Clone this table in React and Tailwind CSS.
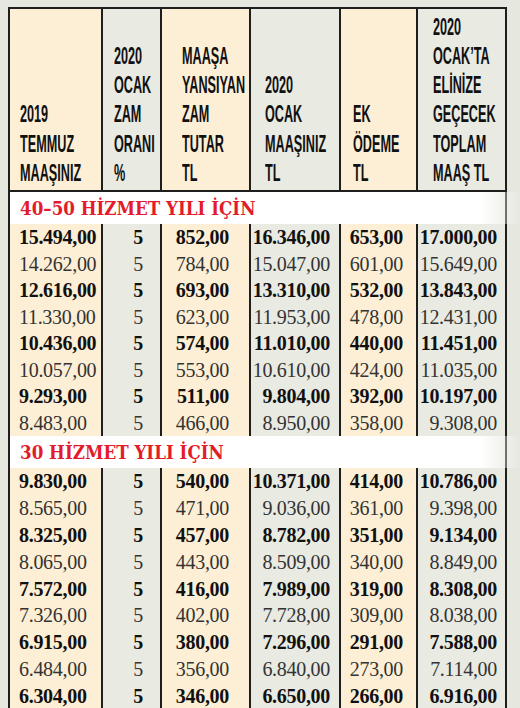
import React from "react";

const cols = [
  { w: "w-[93px]", bg: "bg-[#fdefd6]", border: true, hp: "pl-[10px]", body: "justify-start pl-[9px]" },
  { w: "w-[59px]", bg: "bg-[#e9eae2]", border: true, hp: "pl-[11px]", body: "justify-end pr-[17px]" },
  { w: "w-[89px]", bg: "bg-[#fdefd6]", border: true, hp: "pl-[20px]", body: "justify-end pr-[20px]" },
  { w: "w-[90px]", bg: "bg-[#e9eae2]", border: true, hp: "pl-[14px]", body: "justify-end pr-[9px]" },
  { w: "w-[77px]", bg: "bg-[#fdefd6]", border: true, hp: "pl-[12px]", body: "justify-end pr-[13px]" },
  { w: "w-[87px]", bg: "bg-[#e9eae2]", border: false, hp: "pl-[15px]", body: "justify-end pr-[8px]" },
];

const headers = [
  ["2019", "TEMMUZ", "MAAŞINIZ"],
  ["2020", "OCAK", "ZAM", "ORANI", "%"],
  ["MAAŞA", "YANSIYAN", "ZAM", "TUTAR", "TL"],
  ["2020", "OCAK", "MAAŞINIZ", "TL"],
  ["EK", "ÖDEME", "TL"],
  ["2020", "OCAK’TA", "ELİNİZE", "GEÇECEK", "TOPLAM", "MAAŞ TL"],
];

const sec1 = [
  ["15.494,00", "5", "852,00", "16.346,00", "653,00", "17.000,00"],
  ["14.262,00", "5", "784,00", "15.047,00", "601,00", "15.649,00"],
  ["12.616,00", "5", "693,00", "13.310,00", "532,00", "13.843,00"],
  ["11.330,00", "5", "623,00", "11.953,00", "478,00", "12.431,00"],
  ["10.436,00", "5", "574,00", "11.010,00", "440,00", "11.451,00"],
  ["10.057,00", "5", "553,00", "10.610,00", "424,00", "11.035,00"],
  ["9.293,00", "5", "511,00", "9.804,00", "392,00", "10.197,00"],
  ["8.483,00", "5", "466,00", "8.950,00", "358,00", "9.308,00"],
];

const sec2 = [
  ["9.830,00", "5", "540,00", "10.371,00", "414,00", "10.786,00"],
  ["8.565,00", "5", "471,00", "9.036,00", "361,00", "9.398,00"],
  ["8.325,00", "5", "457,00", "8.782,00", "351,00", "9.134,00"],
  ["8.065,00", "5", "443,00", "8.509,00", "340,00", "8.849,00"],
  ["7.572,00", "5", "416,00", "7.989,00", "319,00", "8.308,00"],
  ["7.326,00", "5", "402,00", "7.728,00", "309,00", "8.038,00"],
  ["6.915,00", "5", "380,00", "7.296,00", "291,00", "7.588,00"],
  ["6.484,00", "5", "356,00", "6.840,00", "273,00", "7.114,00"],
  ["6.304,00", "5", "346,00", "6.650,00", "266,00", "6.916,00"],
];

function Band({ title }) {
  return (
    <div className="h-[32px] mr-[-16px] flex items-center pl-[10px] bg-linear-to-r from-white from-[92%] to-transparent">
      <span className="inline-block origin-left scale-x-[0.88] whitespace-nowrap font-['DejaVu_Serif'] font-bold text-[19px] text-[#e31b2a] leading-none pt-[1px]">
        {title}
      </span>
    </div>
  );
}

function Row({ r, i, h }) {
  const bold = i % 2 === 0;
  return (
    <div className={`flex ${h}`}>
      {r.map((v, j) => (
        <div
          key={j}
          className={`${cols[j].w} ${cols[j].bg} ${cols[j].border ? "border-r-2 border-[#1e1e1e]" : ""} ${cols[j].body} flex items-center`}
        >
          <span
            className={`font-['Liberation_Serif'] text-[20px] leading-none tracking-[-0.3px] ${bold ? "font-bold text-[#111]" : "font-normal text-[#333]"}`}
          >
            {v}
          </span>
        </div>
      ))}
    </div>
  );
}

export default function App() {
  return (
    <div className="w-[520px] h-[708px] overflow-hidden bg-[#e6e7df]">
      <div className="ml-[8px] mt-[7px] w-[499px] border-2 border-b-0 border-[#1e1e1e]">
        <div className="flex h-[183px] border-b-2 border-[#1e1e1e]">
          {headers.map((h, j) => (
            <div
              key={j}
              className={`${cols[j].w} ${cols[j].bg} ${cols[j].border ? "border-r-2 border-[#1e1e1e]" : ""} ${cols[j].hp} flex flex-col justify-end pb-[2px]`}
            >
              <div className="origin-bottom-left scale-x-[0.55] whitespace-nowrap font-['Liberation_Sans'] font-bold text-[23px] leading-[29.2px] text-[#111]">
                {h.map((l, k) => (
                  <div key={k}>{l}</div>
                ))}
              </div>
            </div>
          ))}
        </div>
        <Band title="40–50 HİZMET YILI İÇİN" />
        {sec1.map((r, i) => (
          <Row key={i} r={r} i={i} h="h-[26.5px]" />
        ))}
        <Band title="30 HİZMET YILI İÇİN" />
        {sec2.map((r, i) => (
          <Row key={i} r={r} i={i} h="h-[26.8px]" />
        ))}
      </div>
    </div>
  );
}
